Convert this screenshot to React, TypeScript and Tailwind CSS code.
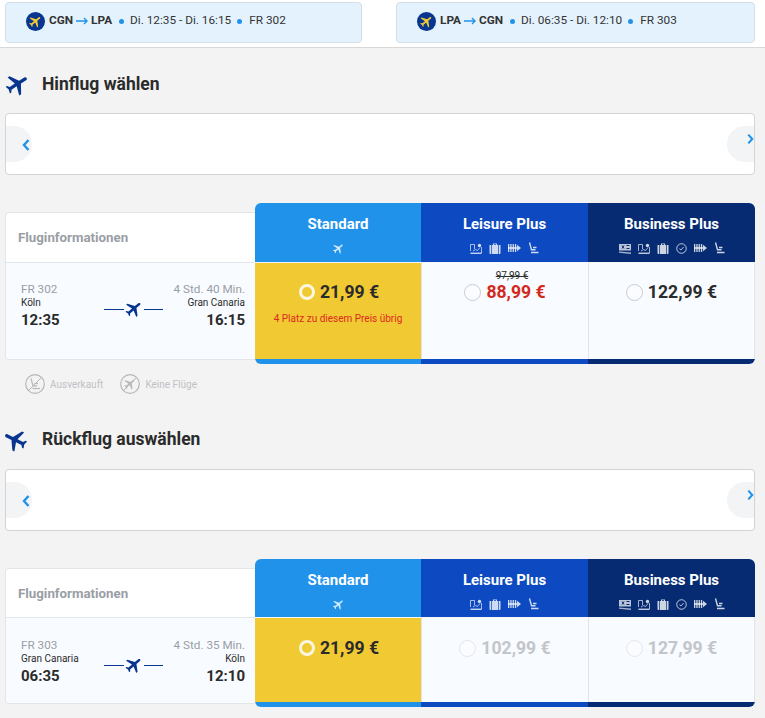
import type { ReactNode } from 'react';

const PLANE =
  'M21 16v-2l-8-5V3.5c0-.83-.67-1.5-1.5-1.5S10 2.67 10 3.5V9l-8 5v2l8-2.5V19l-2 1.5V22l3.5-1 3.5 1v-1.5L13 19v-5.5l8 2.5z';

function Plane({ className, rotate = 50 }: { className: string; rotate?: number }) {
  return (
    <svg viewBox="0 0 24 24" className={className} fill="currentColor">
      <path d={PLANE} transform={`rotate(${rotate} 12 12)`} />
    </svg>
  );
}

function Chevron({ left, className }: { left?: boolean; className: string }) {
  return (
    <svg viewBox="0 0 8 12" className={className} fill="none" stroke="#2092ea" strokeWidth="2.4">
      <path d={left ? 'M6.5 1 2 6l4.5 5' : 'M1.500 1 6 6l-4.500 5'} />
    </svg>
  );
}

function IconTicket() {
  return (
    <svg viewBox="0 0 12 11" className="h-[11px] w-[12px]" fill="currentColor">
      <path d="M0 1h12v6.500H0z" opacity=".9" />
      <path d="M0 8.500l12 1V11L0 9.800z" opacity=".8" />
      <path d="M3 2.500l2 3M5 2.500l-2 3M7.500 2.500h3M7.500 5.500h3" stroke="#062b73" strokeWidth="1" />
    </svg>
  );
}

function IconMap() {
  return (
    <svg viewBox="0 0 12 11" className="h-[11px] w-[12px]" fill="none" stroke="currentColor" strokeWidth=".8">
      <path d="M.5 8V1.500h4V6M.5 10h11V4" />
      <path d="M.5 10.500h11" />
      <path d="M3 8l2.500-1.500 2 1 2.500-3" />
      <circle cx="9.500" cy="2.500" r="1.700" fill="currentColor" stroke="none" />
    </svg>
  );
}

function IconBag() {
  return (
    <svg viewBox="0 0 12 11" className="h-[11px] w-[12px]" fill="currentColor">
      <path d="M4 2V.5h4V2h-1V1.300H5V2z" />
      <path d="M.5 2h1.800v9H1.500a1 1 0 0 1-1-1zM3 2h6v9H3zM9.700 2h1.800v8a1 1 0 0 1-1 1h-.8z" />
    </svg>
  );
}

function IconClock() {
  return (
    <svg viewBox="0 0 12 12" className="h-[11px] w-[11px]" fill="none" stroke="currentColor" strokeWidth="1">
      <circle cx="6" cy="6" r="5.200" />
      <path d="M3.800 6.200 5.400 7.600 8.300 4.400" />
    </svg>
  );
}

function IconSeats() {
  return (
    <svg viewBox="0 0 13 10" className="h-[10px] w-[13px]" fill="currentColor">
      <path d="M0 1h1.300v8H0zM2.300 1h1.300v8H2.300zM4.600 1h1.300v8H4.600zM6.900 1h1.300v8H6.900z" />
      <path d="M0 4.200h9V1.800L13 5 9 8.200V5.800H0z" />
    </svg>
  );
}

const SEAT_PATHS = (
  <>
    <path d="M1.500.5 3.500 7.800h4" />
    <path d="M5 5.500h3.500" />
    <path d="M3 10.500h7.500" />
  </>
);

function IconSeat() {
  return (
    <svg viewBox="0 0 11 12" className="h-[12px] w-[11px]" fill="none" stroke="currentColor" strokeWidth="1.400">
      {SEAT_PATHS}
    </svg>
  );
}

function LegendIcon({ children }: { children: ReactNode }) {
  return (
    <svg viewBox="0 0 20 20" className="h-[20px] w-[20px] text-[#b5b7bb]" fill="none" stroke="currentColor">
      {children}
      <circle cx="10" cy="10" r="9.300" strokeWidth="1.200" />
      <path d="M3.500 16.500 16.500 3.500" strokeWidth="1" />
    </svg>
  );
}

function TopCard({ from, to, times, flight, className }: { from: string; to: string; times: string; flight: string; className: string }) {
  return (
    <div className={`flex h-[41px] items-center rounded border border-[#d5dee6] bg-[#e3f2fd] pb-[3px] pl-[20px] text-[11.8px] text-[#333] ${className}`}>
      <span className="flex h-[19px] w-[19px] items-center justify-center rounded-full bg-[#073590] text-[#f1c933]">
        <Plane className="h-[15px] w-[15px]" />
      </span>
      <b className="ml-[4px] font-bold">{from}</b>
      <svg viewBox="0 0 12 8" className="mx-[3px] h-[8px] w-[12px]" fill="none" stroke="#2092ea" strokeWidth="1.400">
        <path d="M0 4h11M8 1l3 3-3 3" />
      </svg>
      <b className="font-bold">{to}</b>
      <span className="mr-[6px] ml-[7px] h-[5px] w-[5px] rounded-full bg-[#2092ea]" />
      <span>{times}</span>
      <span className="mr-[7px] ml-[6px] h-[5px] w-[5px] rounded-full bg-[#2092ea]" />
      <span>{flight}</span>
    </div>
  );
}

function Heading({ title, flip }: { title: string; flip?: boolean }) {
  return (
    <div className="flex h-[26px] items-center">
      <span className={`flex w-[42px] justify-center text-[#073590] ${flip ? 'pr-[12px]' : 'pr-[8px]'}`}>
        <Plane className="h-[27px] w-[27px]" rotate={flip ? -63 : 57} />
      </span>
      <h2 className="text-[17.5px] font-bold text-[#2b2b2b]">{title}</h2>
    </div>
  );
}

function Carousel() {
  return (
    <div className="ml-[5px] flex h-[62px] w-[750px] items-center justify-between rounded border border-[#d4d4d4] bg-white">
      <span className="flex h-[36px] w-[26px] items-center justify-end rounded-r-[18px] bg-[#f3f4f6] pt-[2px] pr-[2px]">
        <Chevron left className="h-[12px] w-[8px]" />
      </span>
      <span className="flex h-[36px] w-[27px] items-start justify-end rounded-l-[18px] bg-[#f3f4f6] pt-[7px]">
        <Chevron className="h-[12px] w-[7px]" />
      </span>
    </div>
  );
}

function Column({ name, bg, icons, children, selected, bodyClass, width, headH, bodyPad }: {
  name: string;
  bg: string;
  icons: ReactNode;
  children: ReactNode;
  selected?: boolean;
  bodyClass: string;
  width: string;
  headH: string;
  bodyPad: string;
}) {
  return (
    <div className={`flex flex-col ${width}`}>
      <div className={`flex flex-col items-center pt-[12px] text-white ${bg} ${headH}`}>
        <span className="text-[15px] leading-[18px] font-bold">{name}</span>
        <span className="mt-[9px] flex h-[12px] items-center gap-[7px] text-white/80">{icons}</span>
      </div>
      <div className={`flex-1 border-t border-l border-t-[#f4f6f8] border-l-[#e1e4e8] ${bodyPad} ${selected ? 'bg-[#f1c933]' : 'bg-[#f8fbff]'} ${bodyClass}`}>{children}</div>
      <div className={`h-[5px] ${bg}`} />
    </div>
  );
}

function Radio({ tone = 'normal' }: { tone?: 'normal' | 'selected' | 'off' }) {
  if (tone === 'selected') {
    return <span className="h-[16px] w-[16px] rounded-full border-[3px] border-[#fbf6e0] bg-[#f1c933]" />;
  }
  return <span className={`h-[17px] w-[17px] rounded-full border bg-[#fbfcff] ${tone === 'off' ? 'border-[#e4e6ea]' : 'border-[#c9cbd0]'}`} />;
}

function Price({ value, tone = 'normal', radio = 'normal', old }: { value: string; tone?: 'normal' | 'red' | 'off'; radio?: 'normal' | 'selected' | 'off'; old?: string }) {
  const color = tone === 'red' ? 'text-[#d3291d]' : tone === 'off' ? 'text-[#c3c5c9]' : 'text-[#2b2b2b]';
  return (
    <div className="flex flex-col items-center">
      {old && <span className="-mt-[10px] pl-[14px] text-[10px] leading-[10px] text-[#2b2b2b] line-through">{old}</span>}
      <div className={`flex items-center gap-[5px] ${radio === 'selected' ? 'pl-[2px]' : ''}`}>
        <Radio tone={radio} />
        <span className={`text-[17.6px] leading-[22px] font-bold ${color}`}>{value}</span>
      </div>
    </div>
  );
}

const leisureIcons = (
  <>
    <IconMap />
    <IconBag />
    <IconSeats />
    <IconSeat />
  </>
);

const businessIcons = (
  <>
    <IconTicket />
    <IconMap />
    <IconBag />
    <IconClock />
    <IconSeats />
    <IconSeat />
  </>
);

function FlightTable({ flight, duration, from, to, dep, arr, bodyH, cardH, headH, infoH, rowPad, bodyPad, standardNote, leisure, business }: {
  flight: string;
  duration: string;
  from: string;
  to: string;
  dep: string;
  arr: string;
  bodyH: string;
  cardH: string;
  headH: string;
  infoH: string;
  rowPad: string;
  bodyPad: string;
  standardNote?: string;
  leisure: ReactNode;
  business: ReactNode;
}) {
  return (
    <div className="ml-[5px] flex w-[750px] items-start">
      <div className={`mt-[9px] flex w-[250px] flex-col overflow-hidden rounded-l border border-r-0 border-[#e3e5e8] bg-white ${cardH}`}>
        <div className={`flex shrink-0 items-center border-b border-[#e1e6eb] pt-[1px] pl-[12px] text-[13.3px] font-bold text-[#9a9ea5] ${infoH}`}>Fluginformationen</div>
        <div className={`flex flex-1 items-start justify-between bg-[#f8fbff] pr-[10px] pl-[15px] ${rowPad}`}>
          <div className="flex w-[82px] flex-col whitespace-nowrap">
            <span className="text-[11.7px] leading-[14px] text-[#9a9ea5]">{flight}</span>
            <span className="text-[10px] leading-[14px] text-[#2b2b2b]">{from}</span>
            <span className="mt-[1px] text-[15px] leading-[18px] font-bold text-[#2b2b2b]">{dep}</span>
          </div>
          <div className="mt-[17px] flex items-center text-[#073590]">
            <span className="h-px w-[20px] bg-[#073590]" />
            <Plane className="h-[20px] w-[20px]" />
            <span className="h-px w-[19px] bg-[#073590]" />
          </div>
          <div className="flex w-[82px] flex-col items-end whitespace-nowrap">
            <span className="text-[11.7px] leading-[14px] text-[#9a9ea5]">{duration}</span>
            <span className="text-[10px] leading-[14px] text-[#2b2b2b]">{to}</span>
            <span className="mt-[1px] text-[15px] leading-[18px] font-bold text-[#2b2b2b]">{arr}</span>
          </div>
        </div>
      </div>
      <div className={`flex w-[500px] overflow-hidden rounded-md ${bodyH}`}>
        <Column name="Standard" width="w-[166px]" headH={headH} bodyPad={bodyPad} bg="bg-[#2092ea]" icons={<Plane className="h-[13px] w-[13px]" />} selected bodyClass="!border-l-0">
          <Price value="21,99 €" radio="selected" />
          {standardNote && <p className="mt-[10px] text-center text-[10px] leading-[12px] whitespace-nowrap text-[#dc2a1f]">{standardNote}</p>}
        </Column>
        <Column name="Leisure Plus" width="w-[167px]" headH={headH} bodyPad={bodyPad} bg="bg-[#0d4ac2]" icons={leisureIcons} bodyClass="">
          {leisure}
        </Column>
        <Column name="Business Plus" width="w-[167px]" headH={headH} bodyPad={bodyPad} bg="bg-[#062b73]" icons={businessIcons} bodyClass="border-r border-r-[#e1e4e8]">
          {business}
        </Column>
      </div>
    </div>
  );
}

function Legend() {
  return (
    <div className="flex h-[20px] items-center pl-[25px] text-[10px] text-[#bfc1c5]">
      <span className="flex items-center gap-[5px]">
        <LegendIcon>
          <g transform="translate(4.500 4)" strokeWidth="1.200">
            {SEAT_PATHS}
          </g>
        </LegendIcon>
        Ausverkauft
      </span>
      <span className="ml-[17px] flex items-center gap-[5px]">
        <LegendIcon>
          <g transform="translate(3 3) scale(.58)" fill="currentColor" stroke="none">
            <path d={PLANE} transform="rotate(50 12 12)" />
          </g>
        </LegendIcon>
        Keine Flüge
      </span>
    </div>
  );
}

export default function App() {
  return (
    <div className="h-[718px] overflow-hidden bg-[#f3f3f3] font-['Roboto',sans-serif]">
      <div className="flex h-[48px] gap-[34px] border-b border-[#d8d8d8] bg-white pt-[2px] pl-[5px]">
        <TopCard className="w-[357px]" from="CGN" to="LPA" times="Di. 12:35 - Di. 16:15" flight="FR 302" />
        <TopCard className="w-[359px]" from="LPA" to="CGN" times="Di. 06:35 - Di. 12:10" flight="FR 303" />
      </div>

      <div className="mt-[23px]">
        <Heading title="Hinflug wählen" />
      </div>
      <div className="mt-[16px]">
        <Carousel />
      </div>
      <div className="mt-[28px]">
        <FlightTable
          flight="FR 302"
          duration="4 Std. 40 Min."
          from="Köln"
          to="Gran Canaria"
          dep="12:35"
          arr="16:15"
          bodyH="h-[161px]"
          cardH="h-[148px]"
          headH="h-[59px]"
          infoH="h-[50px]"
          rowPad="pt-[19px]"
          bodyPad="pt-[18px]"
          standardNote="4 Platz zu diesem Preis übrig"
          leisure={<Price value="88,99 €" tone="red" old="97,99 €" />}
          business={<Price value="122,99 €" />}
        />
      </div>
      <div className="mt-[10px]">
        <Legend />
      </div>

      <div className="mt-[32px]">
        <Heading title="Rückflug auswählen" flip />
      </div>
      <div className="mt-[17px]">
        <Carousel />
      </div>
      <div className="mt-[28px]">
        <FlightTable
          flight="FR 303"
          duration="4 Std. 35 Min."
          from="Gran Canaria"
          to="Köln"
          dep="06:35"
          arr="12:10"
          bodyH="h-[148px]"
          cardH="h-[136px]"
          headH="h-[58px]"
          infoH="h-[49px]"
          rowPad="pt-[20px]"
          bodyPad="pt-[19px]"
          leisure={<Price value="102,99 €" tone="off" radio="off" />}
          business={<Price value="127,99 €" tone="off" radio="off" />}
        />
      </div>
    </div>
  );
}
